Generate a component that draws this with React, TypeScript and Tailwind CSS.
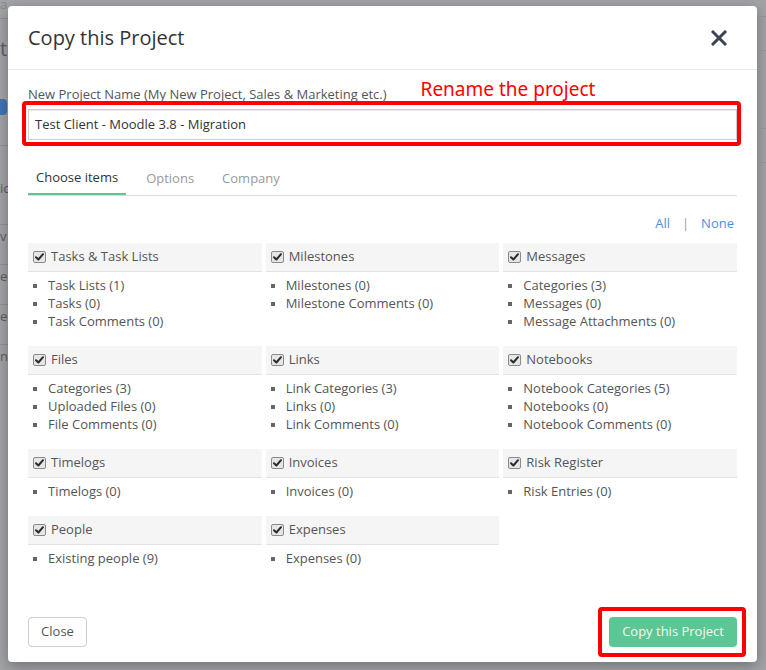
import React from "react";

const sections: { title: string; items: string[] }[] = [
  { title: "Tasks & Task Lists", items: ["Task Lists (1)", "Tasks (0)", "Task Comments (0)"] },
  { title: "Milestones", items: ["Milestones (0)", "Milestone Comments (0)"] },
  { title: "Messages", items: ["Categories (3)", "Messages (0)", "Message Attachments (0)"] },
  { title: "Files", items: ["Categories (3)", "Uploaded Files (0)", "File Comments (0)"] },
  { title: "Links", items: ["Link Categories (3)", "Links (0)", "Link Comments (0)"] },
  { title: "Notebooks", items: ["Notebook Categories (5)", "Notebooks (0)", "Notebook Comments (0)"] },
  { title: "Timelogs", items: ["Timelogs (0)"] },
  { title: "Invoices", items: ["Invoices (0)"] },
  { title: "Risk Register", items: ["Risk Entries (0)"] },
  { title: "People", items: ["Existing people (9)"] },
  { title: "Expenses", items: ["Expenses (0)"] },
];

function Check() {
  return (
    <span className="w-[13px] h-[12px] rounded-[2px] border border-[#8a8a8a] bg-[#e6e6e6] flex items-center justify-center shrink-0">
      <svg width="9" height="8" viewBox="0 0 9 8">
        <path d="M1 4.2 L3.4 6.5 L8 1.2" fill="none" stroke="#2b2b2b" strokeWidth="2" strokeLinecap="round" strokeLinejoin="round" />
      </svg>
    </span>
  );
}

function Section({ title, items }: { title: string; items: string[] }) {
  return (
    <div>
      <div className="h-[29px] bg-[#f5f5f5] border-b border-[#e3e3e3] flex items-center gap-[5px] pl-[5px]">
        <Check />
        <span className="text-[13px] text-[#555]">{title}</span>
      </div>
      <ul className="pt-[5px]">
        {items.map((it) => (
          <li key={it} className="flex items-center h-[18px] text-[13px] text-[#555]">
            <span className="w-[4px] h-[4px] bg-[#666] ml-[5px] mr-[11px] shrink-0" />
            {it}
          </li>
        ))}
      </ul>
    </div>
  );
}

function Line() {
  return <div className="h-px bg-[#8f9093] w-full" />;
}

export default function App() {
  return (
    <div
      className="w-[766px] h-[670px] bg-[#a2a3a6] overflow-hidden flex items-start"
      style={{ fontFamily: '"Open Sans", "Noto Sans", sans-serif' }}
    >
      {/* faint background page fragments, left */}
      <div className="w-[8px] shrink-0 flex flex-col text-[13px] text-[#5c5d60] overflow-hidden whitespace-nowrap">
        <div className="h-[10px] leading-[10px] text-[#8a8b8e] -mt-px">art</div>
        <div className="h-[9px]" />
        <Line />
        <div className="h-[16px]" />
        <div className="h-[28px] leading-[28px] text-[20px]">ts</div>
        <div className="h-[36px]" />
        <div className="h-[16px] w-[7px] rounded-r bg-[#3f76b3]" />
        <div className="h-[30px]" />
        <Line />
        <div className="h-[52px] flex items-end">ic</div>
        <div className="h-[26px]" />
        <Line />
        <div className="h-[21px] flex items-end">v</div>
        <div className="h-[18px]" />
        <Line />
        <div className="h-[21px] flex items-end">en</div>
        <div className="h-[18px]" />
        <Line />
        <div className="h-[21px] flex items-end">en</div>
        <div className="h-[18px]" />
        <Line />
        <div className="h-[21px] flex items-end">nc</div>
      </div>

      {/* modal */}
      <div className="mt-[6px] w-[749px] h-[656px] shrink-0 bg-white rounded-[4px] shadow-[0_4px_14px_rgba(0,0,0,0.3)] flex flex-col">
        <div className="h-[64px] border-b border-[#e5e8ec] flex items-center justify-between pl-[20px] pr-[30px]">
          <h1 className="text-[20px] text-[#333] leading-none">Copy this Project</h1>
          <svg width="16" height="16" viewBox="0 0 16 16">
            <path d="M2 2 L14 14 M14 2 L2 14" stroke="#3b4452" strokeWidth="3" strokeLinecap="square" />
          </svg>
        </div>

        <div className="px-[20px] pt-[15px] flex flex-col">
          <div className="h-[18px] flex items-end gap-[34px]">
            <div className="text-[13px] leading-[18px] text-[#555]">New Project Name (My New Project, Sales &amp; Marketing etc.)</div>
            <div
              className="text-[19px] leading-[18px] text-[#ff0000] mb-[5px] whitespace-nowrap"
              style={{ fontFamily: '"Noto Sans", sans-serif' }}
            >
              Rename the project
            </div>
          </div>
          <div className="relative mt-[6px]">
            <div className="h-[31px] border border-[#cccccc] shadow-[inset_0_1px_1px_rgba(0,0,0,0.08)] flex items-center pl-[6px] text-[13px] text-[#333]">
              Test Client - Moodle 3.8 - Migration
            </div>
            <div className="absolute left-[-6px] right-[-4px] top-[-8px] bottom-[-6px] border-[4px] border-[#ff0000] rounded-[4px]" />
          </div>

          {/* tabs */}
          <div className="mt-[23px] flex gap-[12px] border-b border-[#dcdcdc] text-[13px]">
            <div className="h-[32px] px-[8px] flex items-center text-[#333] border-b-2 border-[#5bc894] -mb-px">Choose items</div>
            <div className="h-[32px] px-[8px] flex items-center text-[#999]">Options</div>
            <div className="h-[32px] px-[8px] flex items-center text-[#999]">Company</div>
          </div>

          <div className="mt-[18px] flex justify-end items-center gap-[12px] pr-[3px] text-[13px] leading-[18px]">
            <span className="text-[#4a90e2]">All</span>
            <span className="text-[#999]">|</span>
            <span className="text-[#4a90e2]">None</span>
          </div>

          <div className="mt-[11px] grid grid-cols-3 gap-x-[4px] gap-y-[15px]">
            {sections.map((s) => (
              <Section key={s.title} title={s.title} items={s.items} />
            ))}
          </div>
        </div>

        <div className="mt-auto px-[20px] pb-[15px] flex items-center justify-between">
          <button className="h-[30px] w-[59px] border border-[#ccc] rounded-[4px] text-[13px] text-[#555] bg-white">Close</button>
          <div className="relative">
            <button className="h-[30px] w-[128px] rounded-[4px] bg-[#5cc794] text-[13px] text-[#eefaf3]">Copy this Project</button>
            <div className="absolute left-[-11px] right-[-9px] top-[-10px] bottom-[-10px] border-[4px] border-[#ff0000] rounded-[4px]" />
          </div>
        </div>
      </div>

      {/* faint background page fragments, right */}
      <div className="w-[9px] shrink-0 flex flex-col">
        <div className="h-[16px]" />
        <Line />
        <div className="h-[33px]" />
        <Line />
        <div className="h-[77px]" />
        <Line />
        <div className="h-[33px]" />
        <Line />
      </div>
    </div>
  );
}
